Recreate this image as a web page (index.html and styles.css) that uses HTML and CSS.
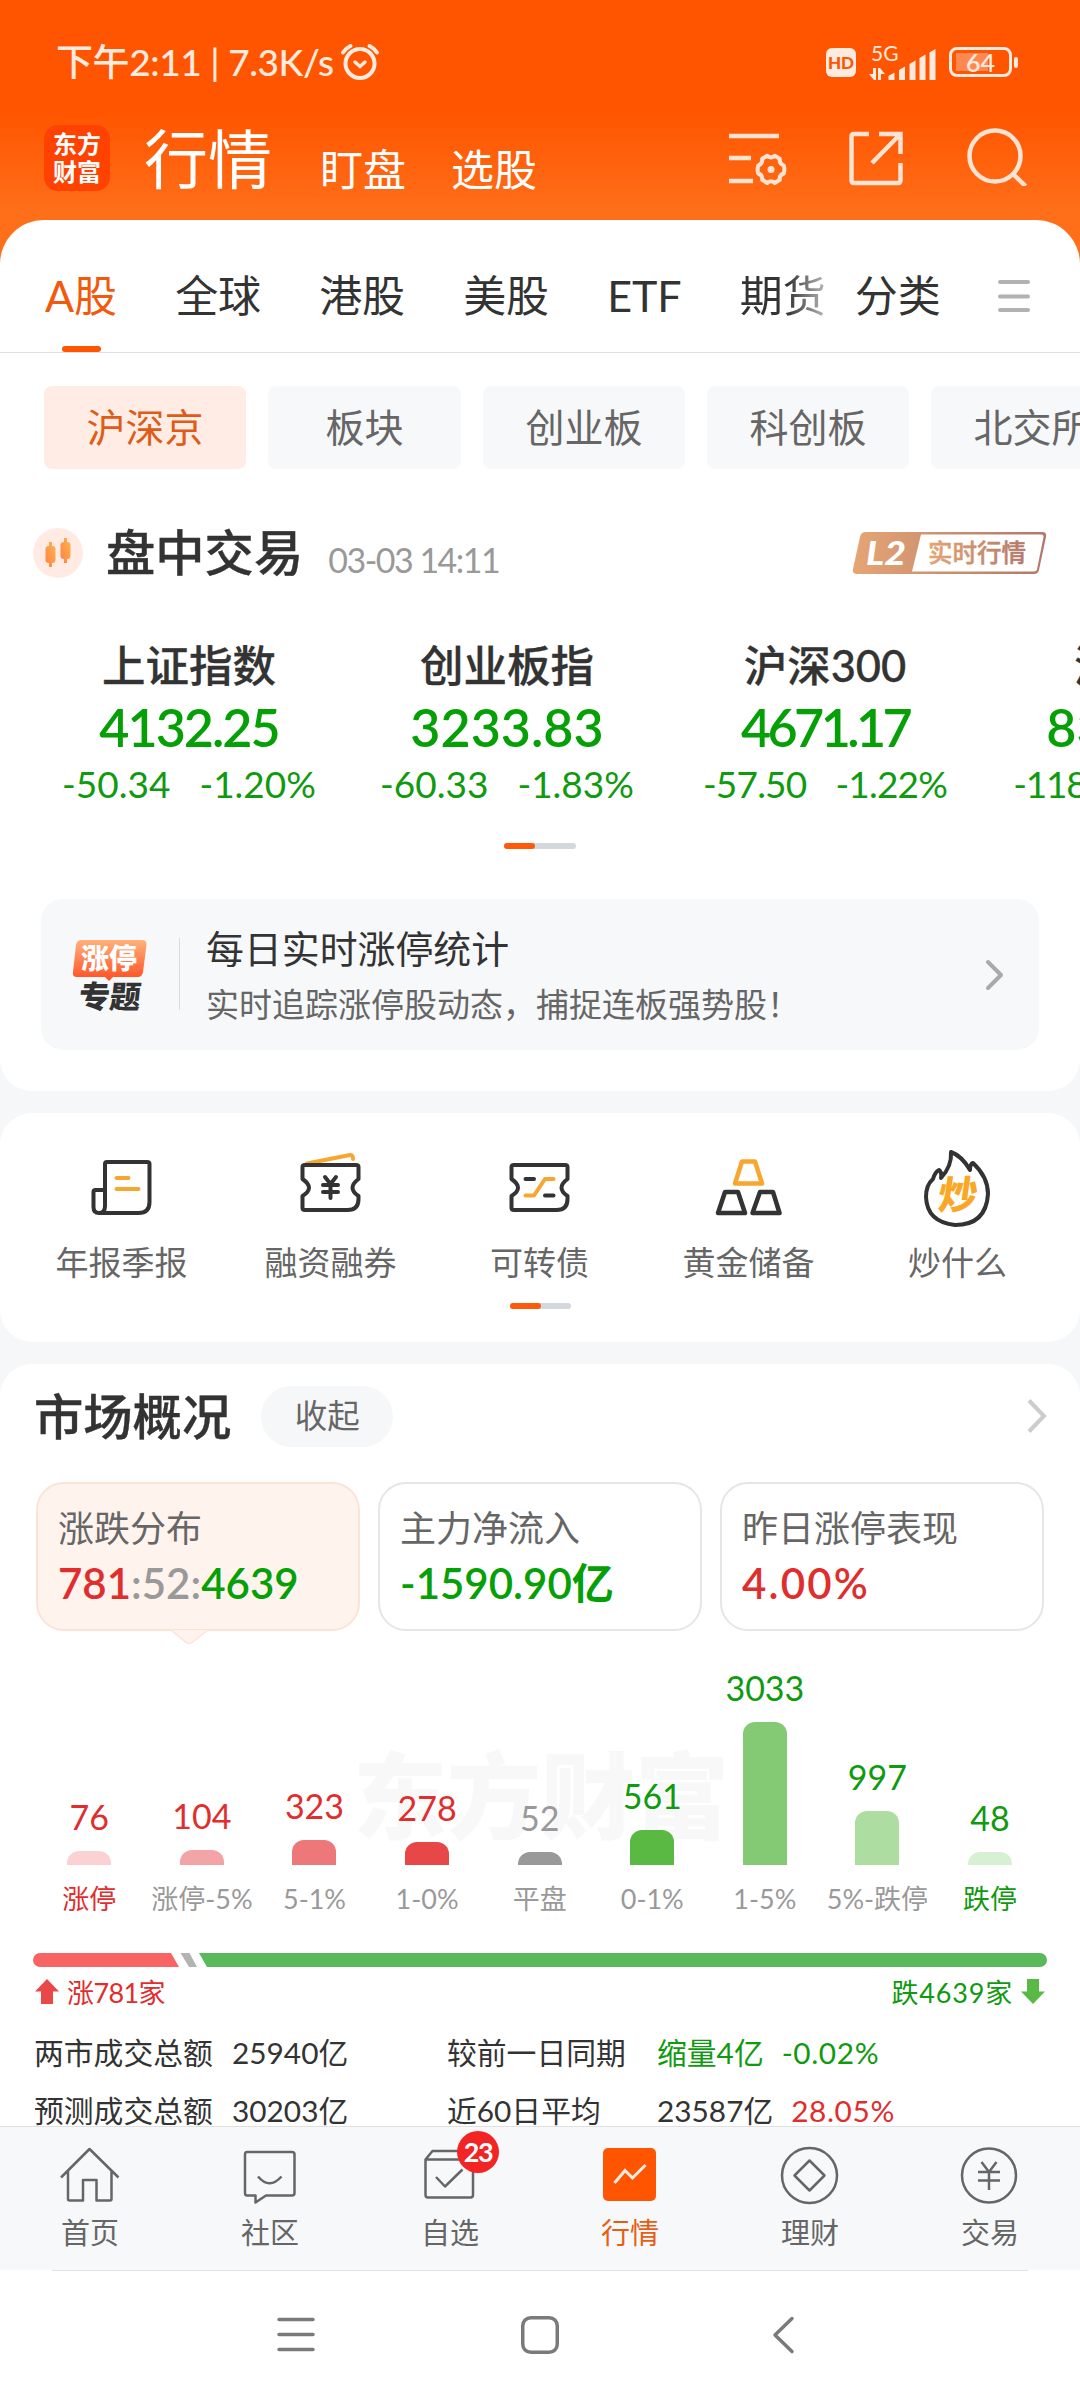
FILE: index.html
```
<!DOCTYPE html>
<html lang="zh-CN">
<head>
    <meta charset="UTF-8">
    <title>行情</title>
    <link rel="stylesheet" href="styles.css">
</head>
<body>
    <header class="header">
        <div class="status-bar">
            <span class="status-time">下午2:11 | 7.3K/s</span>
            <svg class="alarm" width="40" height="38" viewBox="0 0 40 38" fill="none" stroke="#ffeadf" stroke-width="4" stroke-linecap="round">
                <circle cx="20" cy="20.5" r="14.5"/>
                <path d="M3 9.5Q6 5 10.500 3M37 9.500Q34 5 29.500 3"/>
                <path d="M15 19l5 4.500 5-4.500" stroke-width="3.500"/>
            </svg>
            <div class="status-right">
                <span class="hd">HD</span>
                <svg class="signal" width="68" height="38" viewBox="0 0 68 38" fill="#ffeadf">
                    <text x="2" y="18" class="signal-text">5G</text>
                    <path d="M0 31h4v-6h3v12H5zM9 25h2l5 6h-4v6H9z"/>
                    <path d="M19.500 37v-4l6-3.500V37zM30 37V27l6-3.500V37zM40.500 37V21l6-3.500V37zM50.500 37V15l6-3.500V37zM60.500 37V9.500L66.500 6V37z"/>
                </svg>
                <div class="battery"><span>64</span></div>
            </div>
        </div>
        <div class="title-bar">
            <div class="logo">东方<br>财富</div>
            <span class="title-main">行情</span>
            <span class="title-sub">盯盘</span>
            <span class="title-sub">选股</span>
            <div class="title-icons">
                <svg width="60" height="60" viewBox="0 0 60 60" fill="none" stroke="#ffe3d2" stroke-width="4.500">
                    <path d="M1 10h50M1 32h22M1 55h24"/>
                    <path d="M39.300 29.700Q43 33 46.700 29.700L51.800 32.800Q51 37.500 55.800 39.500Q57 43.500 55.800 47.500Q51 49 51.800 53.800L46.700 57Q43 53.500 39.300 57L34.200 53.800Q35 49 30.200 47.500Q29 43.500 30.200 39.500Q35 37.500 34.200 32.800Z" stroke-width="4" stroke-linejoin="round"/>
                    <circle cx="43" cy="43.500" r="3.500" fill="#ffe3d2" stroke="none"/>
                </svg>
                <svg width="60" height="60" viewBox="0 0 60 60" fill="none" stroke="#ffe3d2" stroke-width="4.500">
                    <path d="M21 8H6Q3.500 8 3.500 10.500V54Q3.500 57 6 57H50Q52.500 57 52.500 54V37M31 8H52.500V28M52 8.500L24 37"/>
                </svg>
                <svg width="62" height="60" viewBox="0 0 62 60" fill="none" stroke="#ffe3d2" stroke-width="4.500">
                    <circle cx="28" cy="30" r="25.500"/>
                    <path d="M45 47L58.500 60"/>
                </svg>
            </div>
        </div>
    </header>

    <main class="content">
        <section class="panel panel-first">
            <nav class="tabs">
                <span class="tab tab-active">A股</span>
                <span class="tab">全球</span>
                <span class="tab">港股</span>
                <span class="tab">美股</span>
                <span class="tab">ETF</span>
                <span class="tab tab-fade">期货</span>
                <span class="tab tab-sort">分类</span>
                <svg class="tab-menu" width="34" height="34" viewBox="0 0 34 34" stroke="#b2b2b2" stroke-width="4" stroke-linecap="round">
                    <path d="M3 3h28M3 17.500h28M3 31h28"/>
                </svg>
            </nav>
            <div class="chips">
                <span class="chip chip-active">沪深京</span>
                <span class="chip chip-short">板块</span>
                <span class="chip">创业板</span>
                <span class="chip">科创板</span>
                <span class="chip">北交所</span>
            </div>
            <div class="trade-head">
                <svg width="50" height="50" viewBox="0 0 50 50">
                    <defs>
                        <linearGradient id="candle" x1="0" y1="1" x2="1" y2="0">
                            <stop offset="0" stop-color="#ff7f45"/>
                            <stop offset="1" stop-color="#fcb64e"/>
                        </linearGradient>
                    </defs>
                    <circle cx="25" cy="25" r="25" fill="#ffebe3"/>
                    <g fill="url(#candle)">
                        <path d="M16 14h3v4q3.500 0 3.500 3v11q0 3-3.500 3v4h-3v-4q-3.500 0-3.500-3V21q0-3 3.500-3z"/>
                        <path d="M31 10h3v4q3.500 0 3.500 3v11q0 3-3.500 3v4h-3v-4q-3.500 0-3.500-3V17q0-3 3.500-3z"/>
                    </g>
                </svg>
                <h2>盘中交易</h2>
                <span class="trade-time">03-03 14:11</span>
                <svg class="l2" width="196" height="46" viewBox="0 0 196 46">
                    <defs>
                        <linearGradient id="gold">
                            <stop offset="0" stop-color="#e5a574"/>
                            <stop offset="1" stop-color="#b2786a"/>
                        </linearGradient>
                    </defs>
                    <path d="M14 2H190Q195 2 194 7L187 40Q186 44 182 44H5Q0 44 1 39L8 7Q9 2 14 2Z" fill="url(#gold)"/>
                    <path d="M69 4.500H189Q192 4.500 191.500 7L185 39.500Q184.500 41.500 182 41.500H60Z" fill="#fff"/>
                    <text x="14" y="34.500" class="l2-mark" textLength="40" lengthAdjust="spacingAndGlyphs">L2</text>
                    <text x="76" y="32" class="l2-text">实时行情</text>
                </svg>
            </div>
            <div class="indices">
                <div class="index">
                    <div class="index-name">上证指数</div>
                    <div class="index-value tight">4132.25</div>
                    <div class="index-change"><span>-50.34</span><span>-1.20%</span></div>
                </div>
                <div class="index">
                    <div class="index-name">创业板指</div>
                    <div class="index-value">3233.83</div>
                    <div class="index-change"><span>-60.33</span><span>-1.83%</span></div>
                </div>
                <div class="index">
                    <div class="index-name">沪深300</div>
                    <div class="index-value tighter">4671.17</div>
                    <div class="index-change index-change-tight"><span>-57.50</span><span>-1.22%</span></div>
                </div>
                <div class="index">
                    <div class="index-name">深证50</div>
                    <div class="index-value">8325.46</div>
                    <div class="index-change index-change-last"><span>-118.62</span><span>-1.40%</span></div>
                </div>
            </div>
            <div class="pager"><i></i></div>
            <div class="banner">
                <svg width="76" height="72" viewBox="0 0 76 72">
                    <defs>
                        <linearGradient id="hot" x1="0" y1="0" x2="0" y2="1">
                            <stop offset="0" stop-color="#ffb27c"/>
                            <stop offset="1" stop-color="#ff4e22"/>
                        </linearGradient>
                    </defs>
                    <path d="M9 1H70Q75 1 74.500 6L71 33Q70 38 66 38H41L37 42L33 38H5Q0 38 1 33L4 6Q5 1 9 1Z" fill="url(#hot)"/>
                    <text x="9" y="30" class="hot-top">涨停</text>
                    <text x="6" y="69" class="hot-bottom" transform="skewX(-6) translate(7 0)">专题</text>
                </svg>
                <div class="banner-text">
                    <div class="banner-title">每日实时涨停统计</div>
                    <div class="banner-desc">实时追踪涨停股动态，捕捉连板强势股！</div>
                </div>
                <svg class="arrow" width="20" height="32" viewBox="0 0 20 32" fill="none" stroke="#aaa" stroke-width="4" stroke-linecap="round" stroke-linejoin="round">
                    <path d="M3 3l13 13L3 29"/>
                </svg>
            </div>
        </section>

        <section class="panel tools">
            <div class="tool-list">
                <div class="tool">
                    <svg width="80" height="80" viewBox="1 0 80 80" fill="none" stroke="#333" stroke-width="4" stroke-linecap="round" stroke-linejoin="round">
                        <path d="M24 58V16q0-2 2-2H66q2.500 0 2.500 2V54q0 11-11 11H18q-5.500 0-5.500-6V44q0-2 2-2H24M24 58q0 7-6 7"/>
                        <path d="M35.500 30h12M35.500 41h22" stroke="#f7a730"/>
                    </svg>
                    <span>年报季报</span>
                </div>
                <div class="tool">
                    <svg width="80" height="80" viewBox="1 0 80 80" fill="none" stroke="#333" stroke-width="4" stroke-linecap="round" stroke-linejoin="round">
                        <path d="M17 15.500L60 7q3-.5 3 4" stroke="#f7a730"/>
                        <path d="M15 17H66q2.500 0 2.500 2V31q-12 9 0 17V51q0 11-11 11H15q-2.500 0-2.500-2V48q13-8 0-17V19q0-2 2.500-2Z"/>
                        <path d="M35 29l5.500 7 5.500-7M33 37h15M33 44h15M40.500 37v13"/>
                    </svg>
                    <span>融资融券</span>
                </div>
                <div class="tool">
                    <svg width="80" height="80" viewBox="1 0 80 80" fill="none" stroke="#333" stroke-width="4" stroke-linecap="round" stroke-linejoin="round">
                        <path d="M15 17H66q2.500 0 2.500 2V31q-12 9 0 17V51q0 11-11 11H15q-2.500 0-2.500-2V48q13-8 0-17V19q0-2 2.500-2Z"/>
                        <path d="M26.500 31h8.500M46 47.500h8.500"/>
                        <path d="M26.500 47.500H35L46 31h8.500" stroke="#f7a730"/>
                    </svg>
                    <span>可转债</span>
                </div>
                <div class="tool">
                    <svg width="80" height="80" viewBox="1 0 80 80" fill="none" stroke="#333" stroke-width="4.500" stroke-linejoin="round">
                        <path d="M34 13.500H47L54 35.500H27Z" stroke="#f7a730"/>
                        <path d="M17 44H30L37 65H10ZM52 44H65L71.500 65H44.500Z"/>
                    </svg>
                    <span>黄金储备</span>
                </div>
                <div class="tool">
                    <svg width="80" height="80" viewBox="1 0 80 80" fill="none" stroke="#333" stroke-width="4" stroke-linejoin="round">
                        <path d="M34 4Q45 8 53 22Q53 16 56 15Q71 29 71 46Q69 77 38 77Q10 74 9 49Q9 37 16 31Q18 24 22 22Q25 24 24 30Q35 18 34 4Z"/>
                        <text x="28" y="61" class="fire-text" transform="skewX(-8)">炒</text>
                    </svg>
                    <span>炒什么</span>
                </div>
            </div>
            <div class="pager pager-small"><i></i></div>
        </section>

        <section class="panel market">
            <div class="market-head">
                <h2>市场概况</h2>
                <span class="fold">收起</span>
                <svg class="arrow" width="22" height="36" viewBox="0 0 22 36" fill="none" stroke="#ccc" stroke-width="4">
                    <path d="M3 2.500l15 15.500L3 33.500"/>
                </svg>
            </div>
            <div class="cards">
                <div class="card card-active">
                    <div class="card-name">涨跌分布</div>
                    <div class="card-value"><span class="up">781</span><span class="flat">:52:</span><span class="down">4639</span></div>
                    <svg class="card-tip" width="38" height="16" viewBox="0 0 38 16">
                        <path d="M0 1L15 13.500Q18 15.500 21 13.500L37 1" fill="#fff3ee" stroke="#fce3d8" stroke-width="1.500"/>
                    </svg>
                </div>
                <div class="card">
                    <div class="card-name">主力净流入</div>
                    <div class="card-value down">-1590.90亿</div>
                </div>
                <div class="card">
                    <div class="card-name">昨日涨停表现</div>
                    <div class="card-value card-percent up">4.00%</div>
                </div>
            </div>

            <div class="chart">
                <div class="watermark">东方财富</div>
                <div class="col up"><b>76</b><i class="r1" style="height:14px"></i><span class="up">涨停</span></div>
                <div class="col up"><b>104</b><i class="r2" style="height:15px"></i><span>涨停-5%</span></div>
                <div class="col up"><b>323</b><i class="r3" style="height:25px"></i><span>5-1%</span></div>
                <div class="col up"><b>278</b><i class="r4" style="height:23px"></i><span>1-0%</span></div>
                <div class="col flat"><b>52</b><i class="r5" style="height:13px"></i><span>平盘</span></div>
                <div class="col down"><b>561</b><i class="g1" style="height:35px"></i><span>0-1%</span></div>
                <div class="col down"><b>3033</b><i class="g2" style="height:143px"></i><span>1-5%</span></div>
                <div class="col down"><b>997</b><i class="g3" style="height:54px"></i><span>5%-跌停</span></div>
                <div class="col down"><b>48</b><i class="g4" style="height:13px"></i><span class="down">跌停</span></div>
            </div>

            <svg class="ratio" width="1014" height="14" viewBox="0 0 1014 14">
                <path d="M7 0H138L146 14H7A7 7 0 0 1 7 0Z" fill="#f76463"/>
                <path d="M147.500 0H156.500L164 14H156Z" fill="#b3b3b3"/>
                <path d="M166 0H1007A7 7 0 0 1 1007 14H174Z" fill="#5aba5b"/>
            </svg>
            <div class="ratio-text">
                <svg width="24" height="25" viewBox="0 0 24 25"><path d="M12 0L24 12.500H18V25H6V12.500H0Z" fill="#ea4848"/></svg>
                <span class="up ratio-up">涨781家</span>
                <span class="down ratio-down">跌4639家</span>
                <svg width="24" height="25" viewBox="0 0 24 25"><path d="M12 25L24 12.500H18V0H6V12.500H0Z" fill="#5ab945"/></svg>
            </div>
            <div class="stats">
                <span>两市成交总额</span><span>25940亿</span><span>较前一日同期</span>
                <span class="down">缩量4亿<em class="down">-0.02%</em></span>
                <span>预测成交总额</span><span>30203亿</span><span>近60日平均</span>
                <span>23587亿<em class="up">28.05%</em></span>
            </div>
        </section>
    </main>

    <nav class="bottom-nav">
        <div class="nav-item">
            <svg width="60" height="60" viewBox="0 0 60 60" fill="none" stroke="#666" stroke-width="2.500" stroke-linejoin="round">
                <path d="M1 32.500L29.500 4L58.500 32.500M8 26V54q0 1.500 1.500 1.500H23V35H36.500V55.500H50q1.500 0 1.500-1.500V26"/>
            </svg>
            <span>首页</span>
        </div>
        <div class="nav-item">
            <svg width="60" height="60" viewBox="0 0 60 60" fill="none" stroke="#666" stroke-width="2.500" stroke-linejoin="round">
                <path d="M7 7H52q2.500 0 2.500 2.500V48q0 2.500-2.500 2.500H26L15.500 57.500V50.500H7q-2 0-2-2.500V9.500Q5 7 7 7Z"/>
                <path d="M18 31.500Q29.500 45 41.500 31.500"/>
            </svg>
            <span>社区</span>
        </div>
        <div class="nav-item">
            <svg width="60" height="60" viewBox="0 0 60 60" fill="none" stroke="#666" stroke-width="2.500" stroke-linejoin="round">
                <path d="M5.500 14.500H53V50q0 2.500-2.500 2.500H8q-2.500 0-2.500-2.500ZM5.500 14.500L12.500 6H46L53 14.500"/>
                <path d="M16 32l9 9.500L42.500 24.500"/>
            </svg>
            <span>自选</span>
            <div class="badge">23</div>
        </div>
        <div class="nav-item nav-active">
            <svg width="60" height="60" viewBox="0 0 60 60" fill="none">
                <rect x="3" y="3" width="53" height="53" rx="5" fill="#ff5500"/>
                <path d="M14.500 38L25 25.500L32.500 33L45.500 20" stroke="#ffede4" stroke-width="3"/>
            </svg>
            <span>行情</span>
        </div>
        <div class="nav-item">
            <svg width="60" height="60" viewBox="0 0 60 60" fill="none" stroke="#666" stroke-width="2.500" stroke-linejoin="round">
                <circle cx="29.500" cy="30.500" r="27.500"/>
                <path d="M29.500 15.500L44.500 30.500L29.500 45.500L14.500 30.500Z"/>
            </svg>
            <span>理财</span>
        </div>
        <div class="nav-item">
            <svg width="60" height="60" viewBox="0 0 60 60" fill="none" stroke="#666" stroke-width="2.500">
                <circle cx="29" cy="30.500" r="27"/>
                <path d="M21.500 17L29 27L36.500 17M18 27H40M18 35.500H40M29 27V45"/>
            </svg>
            <span>交易</span>
        </div>
    </nav>

    <footer class="system-bar">
        <svg width="38" height="38" viewBox="0 0 38 38" stroke="#7a7a7a" stroke-width="3.500" stroke-linecap="round"><path d="M2 3.500h34M2 18.500h34M2 33.500h34"/></svg>
        <svg width="38" height="38" viewBox="0 0 38 38" fill="none" stroke="#7a7a7a" stroke-width="3.500"><rect x="1.750" y="1.750" width="34.500" height="34.500" rx="8"/></svg>
        <svg width="38" height="38" viewBox="0 0 38 38" fill="none" stroke="#7a7a7a" stroke-width="3.500" stroke-linecap="round" stroke-linejoin="round"><path d="M27 2.500L10 19l17 16.500"/></svg>
    </footer>
</body>
</html>
```
FILE: styles.css
```
* {
    box-sizing: border-box;
}

body {
    margin: 0;
    width: 1080px;
    height: 2400px;
    overflow: hidden;
    display: flex;
    flex-direction: column;
    background: linear-gradient(#ff5500 0, #ff5500 112px, #ff6f1a 215px, #ff6f1a 300px, #f6f7f9 300px);
    font-family: Lato, "Noto Sans CJK SC", sans-serif;
    color: #333;
    white-space: nowrap;
}

svg {
    display: block;
    flex: none;
}

h2 {
    margin: 0;
    font-size: 49.3px;
    line-height: 60px;
    font-weight: 500;
    -webkit-text-stroke: 0.4px #333;
}

.up { color: #e02d2d; }
.down { color: #0f9a0f; }
.flat { color: #999; }

/* header */
.header {
    height: 220px;
    flex: none;
}

.status-bar {
    display: flex;
    align-items: center;
    height: 80px;
    padding: 44px 62px 0 56px;
    color: #ffeadf;
}

.status-time {
    font-size: 37px;
    line-height: 38px;
    font-weight: 500;
    letter-spacing: -0.4px;
    width: 284px;
}

.status-right {
    display: flex;
    align-items: center;
    margin-left: auto;
}

.hd {
    width: 30px;
    height: 29px;
    border-radius: 6px;
    background: #ffeadf;
    color: #ff5500;
    font-size: 17px;
    line-height: 29px;
    font-weight: 900;
    text-align: center;
}

.signal {
    margin-left: 13px;
}

.signal-text {
    font-size: 21px;
}

.battery {
    position: relative;
    width: 63px;
    height: 30px;
    margin: 0 6px 0 12px;
    border: 3px solid #ffeadf;
    border-radius: 8px;
    background: linear-gradient(#ff8850, #ff8850) 4px 3px / 32px 18px no-repeat;
    font-size: 25px;
    line-height: 25px;
    font-weight: 600;
    text-align: center;
}

.battery::after {
    content: "";
    position: absolute;
    right: -9px;
    top: 7px;
    width: 4px;
    height: 11px;
    border-radius: 2px;
    background: #ffeadf;
}

.title-bar {
    display: flex;
    align-items: center;
    height: 140px;
    padding: 0 51px 0 44px;
    color: #fff;
}

.logo {
    width: 66px;
    height: 66px;
    margin-top: 16px;
    border-radius: 14px;
    background: #ff4200;
    font-family: "Noto Sans CJK SC", sans-serif;
    font-size: 24px;
    line-height: 28px;
    font-weight: 700;
    text-align: center;
    padding-top: 4px;
}

.title-main {
    font-size: 64px;
    line-height: 70px;
    margin: 18px 48px 0 34px;
}

.title-sub {
    font-size: 43px;
    line-height: 50px;
    margin: 39px 45px 0 0;
}

.title-icons {
    display: flex;
    gap: 59.5px;
    margin-left: auto;
    padding-top: 11px;
}

/* panels */
.content {
    flex: 1;
    overflow: hidden;
}

.panel {
    background: #fff;
    border-radius: 32px;
    margin-bottom: 22px;
}

.panel-first {
    height: 871px;
    border-radius: 44px 44px 32px 32px;
}

.tabs {
    display: flex;
    align-items: center;
    height: 133px;
    padding: 20px 49px 0 45px;
    border-bottom: 1px solid #e0e0e0;
    font-size: 43px;
    line-height: 112px;
}

.tab {
    margin-right: 58px;
}

.tab-active {
    position: relative;
    color: #f2590d;
}

.tab-active::after {
    content: "";
    position: absolute;
    left: 17px;
    bottom: 0;
    width: 39px;
    height: 6px;
    border-radius: 3px;
    background: #ff5500;
}

.tab-fade {
    margin-right: 29px;
    background: linear-gradient(90deg, #333 55%, #bbb);
    -webkit-background-clip: text;
    background-clip: text;
    color: transparent;
}

.tab-sort {
    margin-right: 0;
}

.tab-menu {
    margin-left: auto;
}

.chips {
    display: flex;
    gap: 22px;
    padding: 33px 0 0 44px;
    overflow: hidden;
}

.chip {
    flex: none;
    width: 202px;
    height: 83px;
    border-radius: 8px;
    background: #f7f8fa;
    color: #666;
    font-size: 39px;
    line-height: 82px;
    text-align: center;
}

.chip-short {
    width: 193px;
}

.chip-active {
    background: #ffede5;
    color: #de5c16;
}

.trade-head {
    display: flex;
    align-items: center;
    height: 60px;
    margin-top: 54px;
    padding: 0 32px 0 33px;
}

.trade-head h2 {
    margin: -2px 0 0 23px;
}

.trade-time {
    margin: 13px 0 0 25px;
    font-size: 34px;
    line-height: 40px;
    letter-spacing: -1.5px;
    color: #999;
}

.l2 {
    margin-left: auto;
}

.l2-mark {
    font-size: 33px;
    font-weight: 900;
    font-style: italic;
    fill: #fff;
}

.l2-text {
    font-size: 24.5px;
    font-weight: 500;
    fill: url(#gold);
    stroke: url(#gold);
    stroke-width: 0.5px;
}

.indices {
    display: flex;
    margin: 52px 0 0 30px;
    overflow: hidden;
}

.index {
    flex: none;
    width: 318px;
    text-align: center;
}

.index-name {
    font-size: 43.5px;
    line-height: 60px;
    font-weight: 500;
    -webkit-text-stroke: 0.3px #333;
}

.index-value {
    font-size: 52px;
    line-height: 64px;
    font-weight: 600;
    color: #05a005;
}

.tight {
    letter-spacing: -2px;
}

.tighter {
    letter-spacing: -3.6px;
}

.index-change {
    display: flex;
    justify-content: center;
    gap: 29px;
    font-size: 37px;
    line-height: 50px;
    color: #0f9a0f;
}

.index-change-tight {
    letter-spacing: -0.8px;
}

.index-change-last {
    letter-spacing: -1.2px;
}

.pager {
    width: 72px;
    height: 6px;
    margin: 34px auto 0;
    border-radius: 3px;
    background: #d3d8dd;
}

.pager i {
    display: block;
    width: 31px;
    height: 6px;
    border-radius: 3px;
    background: #ff5a0a;
}

.banner {
    display: flex;
    align-items: center;
    height: 151px;
    margin: 50px 41px 0;
    padding: 0 34px 0 31px;
    border-radius: 22px;
    background: #f7f8fa;
}

.banner-text {
    position: relative;
    margin-left: 31px;
    padding-left: 27px;
}

.banner-text::before {
    content: "";
    position: absolute;
    left: 0;
    top: 20px;
    width: 1px;
    height: 72px;
    background: #ddd;
}

.banner-title {
    font-size: 37.9px;
    line-height: 56px;
    padding-top: 3px;
}

.banner-desc {
    font-size: 33px;
    line-height: 54px;
    color: #666;
}

.arrow {
    margin-left: auto;
}

.hot-top {
    font-size: 28px;
    font-weight: 900;
    fill: #fff;
}

.hot-bottom {
    font-size: 31px;
    font-weight: 900;
    fill: #333;
}

/* shortcuts */
.tools {
    height: 229px;
    padding-top: 35px;
}

.tool-list {
    display: flex;
    padding-left: 17px;
}

.tool {
    display: flex;
    flex-direction: column;
    align-items: center;
    width: 209px;
    font-size: 33px;
    line-height: 68px;
    color: #666;
}

.fire-text {
    font-size: 39px;
    font-weight: 900;
    fill: #fba624;
    stroke: none;
}

.pager-small {
    width: 61px;
    margin-top: 7px;
}

/* market overview */
.market {
    height: 800px;
}

.market-head {
    display: flex;
    align-items: center;
    height: 104px;
    padding: 0 32px 0 34px;
}

.fold {
    width: 132px;
    height: 61px;
    margin-left: 30px;
    border-radius: 31px;
    background: #f6f7f9;
    color: #666;
    font-size: 32.5px;
    line-height: 60px;
    text-align: center;
}

.cards {
    display: flex;
    gap: 18px;
    padding: 14px 36px 0;
}

.card {
    width: 324px;
    height: 149px;
    padding: 19px 0 0 20px;
    border: 2px solid #e6e6e6;
    border-radius: 28px;
}

.card-active {
    position: relative;
    border-color: #fce3d8;
    background: #fff3ee;
}

.card-tip {
    position: absolute;
    left: 133px;
    top: 145px;
}

.card-name {
    font-size: 36px;
    line-height: 50px;
    color: #666;
}

.card-value {
    font-size: 42px;
    line-height: 60px;
    font-weight: 600;
}

.card-value.down,
.card-value .down {
    color: #05a005;
}

.card-percent {
    letter-spacing: 2.2px;
}

.chart {
    position: relative;
    display: flex;
    align-items: flex-end;
    height: 288px;
    padding-left: 33px;
}

.watermark {
    position: absolute;
    left: 353px;
    top: 105px;
    font-size: 94px;
    line-height: 120px;
    font-weight: 900;
    color: #f8f8f8;
}

.col {
    position: relative;
    display: flex;
    flex-direction: column;
    align-items: center;
    width: 112.6px;
}

.col b {
    font-size: 34px;
    line-height: 40px;
    font-weight: 400;
    margin-bottom: 14px;
}

.col i {
    width: 44px;
    border-radius: 12px 12px 0 0;
}

.col span {
    font-size: 27px;
    line-height: 40px;
    margin-top: 14px;
}

.col span:not(.up):not(.down) {
    color: #999;
}

.r1 { background: #fad2d3; }
.r2 { background: #f3a4a6; }
.r3 { background: #ee7779; }
.r4 { background: #e84747; }
.r5 { background: #999; }
.g1 { background: #5ab943; }
.g2 { background: #84ca75; }
.g3 { background: #aedda2; }
.g4 { background: #d7efd3; }

.ratio {
    margin: 34px 33px 0;
}

.ratio-text {
    display: flex;
    align-items: center;
    height: 36px;
    margin-top: 6px;
    padding: 0 35px;
    gap: 8px;
    font-size: 27px;
}

.ratio-up {
    letter-spacing: -0.6px;
}

.ratio-down {
    margin-left: auto;
    letter-spacing: 0.8px;
}

.stats {
    display: grid;
    grid-template-columns: 198px 215px 210px auto;
    margin-top: 15px;
    padding-left: 34px;
    font-size: 29.8px;
    line-height: 58px;
}

.stats em {
    font-style: normal;
    margin-left: 18px;
    letter-spacing: 0.6px;
}

/* bottom navigation */
.bottom-nav {
    position: relative;
    display: flex;
    flex: none;
    height: 144px;
    background: #f7f8fa;
    border-top: 1px solid #e0e0e0;
}

.nav-item {
    position: relative;
    display: flex;
    flex-direction: column;
    align-items: center;
    width: 180px;
    padding-top: 18px;
    font-size: 29px;
    line-height: 56px;
    color: #666;
}

.nav-active {
    color: #e85d12;
}

.badge {
    position: absolute;
    left: 97px;
    top: 4px;
    width: 42px;
    height: 42px;
    border-radius: 50%;
    background: #f22424;
    color: #fff;
    font-size: 27px;
    line-height: 41px;
    font-weight: 700;
    letter-spacing: -1.5px;
    text-align: center;
}

.system-bar {
    display: flex;
    flex: none;
    justify-content: center;
    gap: 206px;
    height: 130px;
    padding-top: 46px;
    background: linear-gradient(#e2e2e2, #e2e2e2) center top / 976px 1px no-repeat #fff;
}
```
